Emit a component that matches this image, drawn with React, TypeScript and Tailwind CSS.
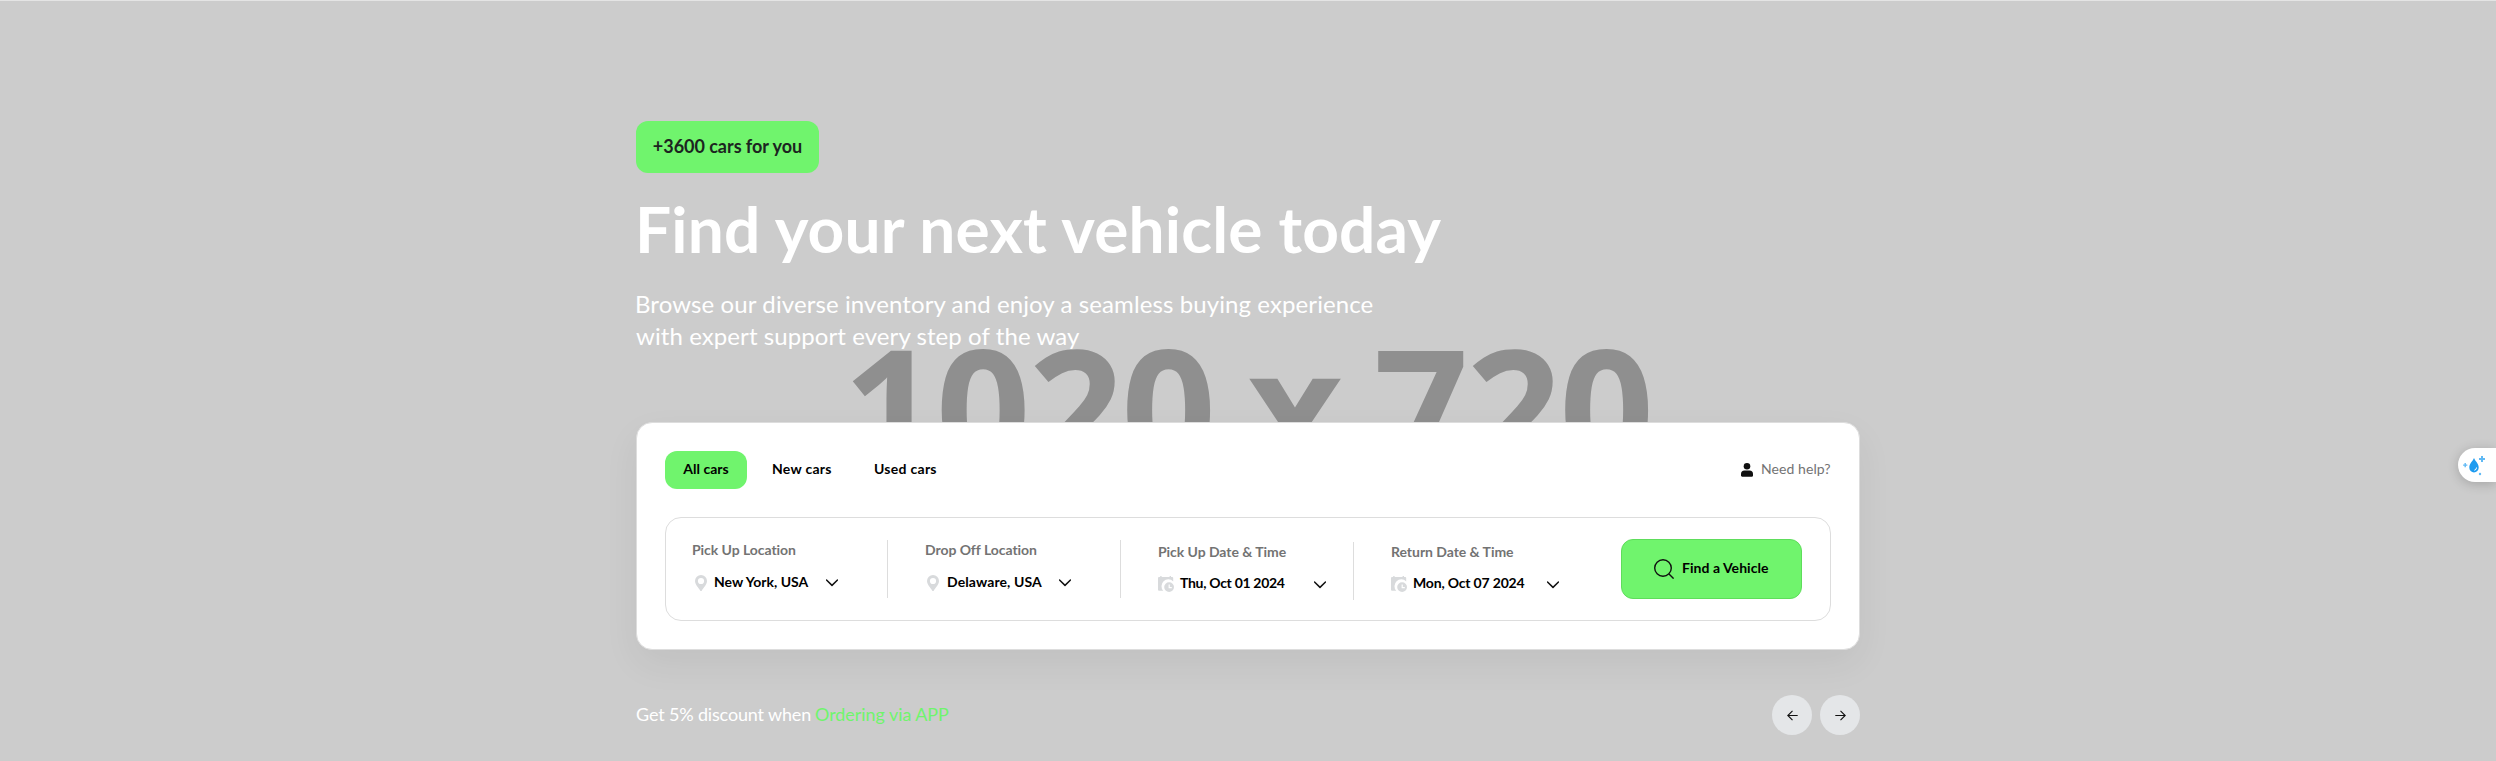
import type { ReactNode } from "react";

function Pin() {
  return (
    <svg className="mt-[3px] h-4 w-3 shrink-0" viewBox="0 0 12 16" fill="#d8dadc">
      <path
        fillRule="evenodd"
        d="M6 0a6 6 0 0 0-6 6c0 3.600 3.400 6.300 5.100 9.400.4.8 1.400.8 1.800 0C8.600 12.300 12 9.600 12 6a6 6 0 0 0-6-6Zm0 2.900a3.100 3.100 0 1 1 0 6.200 3.100 3.100 0 0 1 0-6.200Z"
      />
    </svg>
  );
}

function CalendarClock() {
  return (
    <svg className="mt-[3px] size-4 shrink-0" viewBox="0 0 16 16" fill="#d8dadc">
      <path d="M2.200 0h1.400v1h8V0H13v1h1.200a1 1 0 0 1 1 1v3.500A6.300 6.300 0 0 0 5.300 14.800H1a1 1 0 0 1-1-1V2a1 1 0 0 1 1-1h1.200Z" />
      <path
        fillRule="evenodd"
        d="M11.100 6.200a4.900 4.900 0 1 0 0 9.800 4.900 4.900 0 0 0 0-9.800Zm-.5 2.300h1.200v2.500h2v1.200h-3.200Z"
      />
    </svg>
  );
}

function Chevron({ className }: { className: string }) {
  return (
    <svg className={`h-2 w-3 shrink-0 ${className}`} viewBox="0 0 12 8" fill="none" stroke="#101010" strokeWidth="1.500">
      <path d="M.5 1 6 6.400 11.500 1" strokeLinecap="round" strokeLinejoin="round" />
    </svg>
  );
}

type FieldProps = {
  label: string;
  labelClass: string;
  className: string;
  rowClass: string;
  icon: ReactNode;
  value: string;
  valueClass: string;
  chevronClass: string;
};

function Field({ label, labelClass, className, rowClass, icon, value, valueClass, chevronClass }: FieldProps) {
  return (
    <div className={`h-[58px] shrink-0 border-[#dddddd] text-sm leading-5 font-bold whitespace-nowrap ${className}`}>
      <div className={`text-[#737373] ${labelClass}`}>{label}</div>
      <div className={`flex h-5 items-start ${rowClass}`}>
        {icon}
        <span className={`shrink-0 text-black ${valueClass}`}>{value}</span>
        <Chevron className={chevronClass} />
      </div>
    </div>
  );
}

export default function App() {
  return (
    <main className="relative h-[761px] w-[2496px] overflow-hidden border-t border-[#e4e4e4] bg-[#cccccc] font-['Lato',sans-serif] text-white">
      <div
        className="absolute top-[321px] left-[843px] font-['Noto_Sans',sans-serif] text-[166px] leading-[166px] font-bold tracking-[-2.2px] [word-spacing:-8px] whitespace-nowrap text-[#8f8f8f]"
        aria-hidden="true"
      >
        1020 x 720
      </div>

      <div className="relative mx-auto flex w-[1224px] flex-col pt-[120px]">
        <div className="flex h-[52px] w-[183px] justify-center rounded-xl bg-[#70f46d] text-lg leading-[50px] font-bold tracking-[-0.03px] text-[#1c2420]">
          +3600 cars for you
        </div>
        <h1 className="mt-[17px] -ml-px text-[64px] leading-[77px] font-bold tracking-[0.18px] whitespace-nowrap">
          Find your next vehicle today
        </h1>
        <p className="mt-[21px] text-2xl leading-8 whitespace-nowrap">
          <span className="-ml-px block tracking-[0.1px]">
            Browse our diverse inventory and enjoy a seamless buying experience
          </span>
          <span className="block tracking-[0.08px]">with expert support every step of the way</span>
        </p>

        <section className="mt-[70px] h-[228px] rounded-2xl border border-[#dddddd] bg-white p-7 shadow-[0_14px_36px_rgba(0,0,0,0.06)]">
          <div className="flex h-[38px] text-sm leading-9 text-black">
            <button className="flex w-[82px] justify-center rounded-xl bg-[#70f46d] font-bold">All cars</button>
            <button className="ml-[25px] flex w-[102px] font-bold tracking-[0.28px]">New cars</button>
            <button className="flex font-bold tracking-[0.28px]">Used cars</button>
            <a className="ml-auto flex w-[90px] text-[#737373]">
              <svg className="mt-3 h-3.5 w-3 shrink-0" viewBox="0 0 12 14" fill="#101010">
                <circle cx="6" cy="3.300" r="3.300" />
                <path d="M3.500 7.500h5A3.500 3.500 0 0 1 12 11v1.500c0 .8-.5 1.200-1.200 1.200H1.200C.5 13.700 0 13.300 0 12.500V11a3.500 3.500 0 0 1 3.500-3.500Z" />
              </svg>
              <span className="ml-[8px] tracking-[0.08px] whitespace-nowrap">Need help?</span>
            </a>
          </div>

          <div className="mt-7 flex h-[104px] items-start rounded-2xl border border-[#dddddd]">
            <Field
              className="mt-[22px] w-[222px] border-r pl-[26px]"
              label="Pick Up Location"
              labelClass="tracking-[-0.05px]"
              rowClass="mt-3 pl-[3px]"
              icon={<Pin />}
              value="New York, USA"
              valueClass="ml-[7px] w-[112px] tracking-[0px]"
              chevronClass="mt-[7px]"
            />
            <Field
              className="mt-[22px] w-[233px] border-r pl-[37px]"
              label="Drop Off Location"
              labelClass="tracking-[-0.05px]"
              rowClass="mt-3 pl-[2px]"
              icon={<Pin />}
              value="Delaware, USA"
              valueClass="ml-[8px] w-[112px] tracking-[0.1px]"
              chevronClass="mt-[7px]"
            />
            <Field
              className="mt-[24px] w-[233px] border-r pl-[37px]"
              label="Pick Up Date & Time"
              labelClass="tracking-[-0.05px]"
              rowClass="mt-[11px]"
              icon={<CalendarClock />}
              value="Thu, Oct 01 2024"
              valueClass="ml-[6px] w-[134px] tracking-[-0.3px]"
              chevronClass="mt-[8px]"
            />
            <Field
              className="mt-[24px] w-[267px] pl-[37px]"
              label="Return Date & Time"
              labelClass="tracking-[-0.04px]"
              rowClass="mt-[11px]"
              icon={<CalendarClock />}
              value="Mon, Oct 07 2024"
              valueClass="ml-[6px] w-[134px] tracking-[-0.18px]"
              chevronClass="mt-[8px]"
            />
            <button className="mt-[21px] flex h-[60px] w-[181px] items-center rounded-xl border border-[#5edd5b] bg-[#70f46d] pl-8 text-sm font-bold text-black">
              <svg className="size-5 shrink-0" viewBox="0 0 20 20" fill="none" stroke="#101010" strokeWidth="1.400">
                <circle cx="9" cy="9" r="8.300" />
                <path d="m15 15 4.600 4.600" />
              </svg>
              <span className="mb-0.5 ml-2 tracking-[0.04px]">Find a Vehicle</span>
            </button>
          </div>
        </section>

        <div className="mt-[45px] flex h-10 items-center">
          <p className="mb-0.5 flex text-lg whitespace-nowrap">
            <span className="w-[179px] tracking-[-0.16px]">Get 5% discount when</span>
            <a className="tracking-[-0.06px] text-[#70f46d]">Ordering via APP</a>
          </p>
          <div className="ml-auto flex gap-2">
            <button className="flex size-10 items-center justify-center rounded-full bg-[#e4e6e8]">
              <svg className="h-[11px] w-[11px]" viewBox="0 0 11 11" fill="none" stroke="#101010" strokeWidth="1.100">
                <path d="M5.500 .8.8 5.500l4.700 4.700M.8 5.500h9.900" />
              </svg>
            </button>
            <button className="flex size-10 items-center justify-center rounded-full bg-[#e4e6e8]">
              <svg className="h-[11px] w-[11px]" viewBox="0 0 11 11" fill="none" stroke="#101010" strokeWidth="1.100">
                <path d="M5.500 .8l4.700 4.700-4.700 4.700M10.200 5.500H.3" />
              </svg>
            </button>
          </div>
        </div>
      </div>

      <div className="absolute top-[447px] right-0 h-[34px] w-[38px] rounded-l-full bg-white shadow-[0_2px_12px_rgba(0,0,0,0.2)]">
        <svg className="size-full" viewBox="0 0 38 34" fill="#1d9bf0">
          <path d="M16 10c1 3 4.700 5.300 4.700 9.500a4.700 4.900 0 0 1-9.400 0C11.300 15.300 15 13 16 10Z" />
          <path d="M18.500 19.500a2.700 2.700 0 0 1-2.200 2.800" fill="none" stroke="#fff" strokeWidth="1" />
          <path d="M23 8h2v2h2v2h-2v2h-2v-2h-2v-2h2ZM6.500 15h1.400v1.400h1.400v1.400H7.900v1.400H6.500v-1.400H5.100v-1.400h1.400Z" opacity=".7" />
          <circle cx="22" cy="26" r="1.200" opacity=".7" />
        </svg>
      </div>
    </main>
  );
}
